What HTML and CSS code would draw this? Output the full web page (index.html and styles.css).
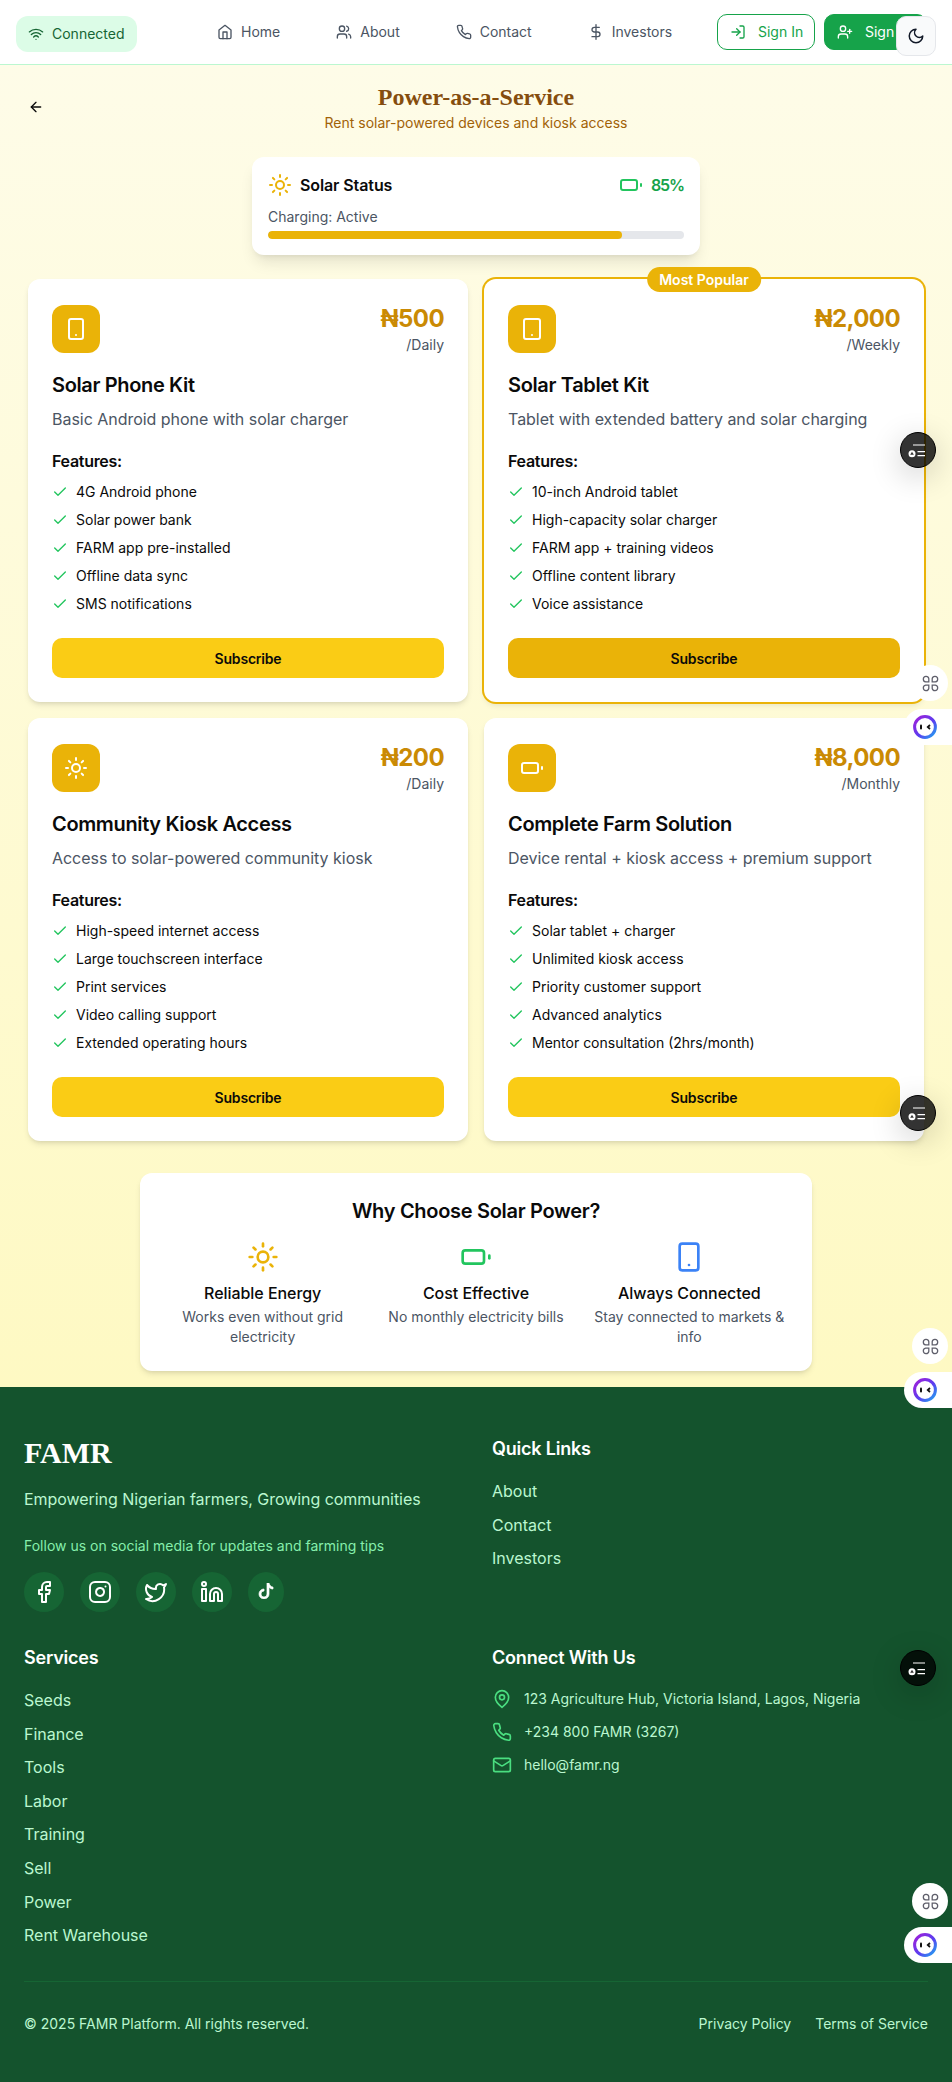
FILE: index.html
```html
<!DOCTYPE html>
<html lang="en">
<head>
    <meta charset="UTF-8">
    <title>Power-as-a-Service</title>
    <link rel="stylesheet" href="styles.css">
</head>
<body>
    <svg class="sprite" width="0" height="0" aria-hidden="true">
        <defs>
            <linearGradient id="face-ring" x1="0" y1="0" x2="1" y2="1">
                <stop offset="0" stop-color="#a21fd8"/>
                <stop offset="0.55" stop-color="#5b3df0"/>
                <stop offset="1" stop-color="#1fa8f0"/>
            </linearGradient>
        </defs>
        <symbol id="i-wifi" viewBox="0 0 24 24"><path d="M12 20h.01"/><path d="M2 8.82a15 15 0 0 1 20 0"/><path d="M5 12.859a10 10 0 0 1 14 0"/><path d="M8.5 16.429a5 5 0 0 1 7 0"/></symbol>
        <symbol id="i-home" viewBox="0 0 24 24"><path d="m3 9 9-7 9 7v11a2 2 0 0 1-2 2H5a2 2 0 0 1-2-2z"/><polyline points="9 22 9 12 15 12 15 22"/></symbol>
        <symbol id="i-users" viewBox="0 0 24 24"><path d="M16 21v-2a4 4 0 0 0-4-4H6a4 4 0 0 0-4 4v2"/><circle cx="9" cy="7" r="4"/><path d="M22 21v-2a4 4 0 0 0-3-3.87"/><path d="M16 3.13a4 4 0 0 1 0 7.75"/></symbol>
        <symbol id="i-phone" viewBox="0 0 24 24"><path d="M22 16.92v3a2 2 0 0 1-2.18 2 19.79 19.79 0 0 1-8.63-3.07 19.5 19.5 0 0 1-6-6 19.79 19.79 0 0 1-3.07-8.67A2 2 0 0 1 4.11 2h3a2 2 0 0 1 2 1.72 12.84 12.84 0 0 0 .7 2.81 2 2 0 0 1-.45 2.11L8.09 9.91a16 16 0 0 0 6 6l1.27-1.27a2 2 0 0 1 2.11-.45 12.84 12.84 0 0 0 2.81.7A2 2 0 0 1 22 16.92z"/></symbol>
        <symbol id="i-dollar" viewBox="0 0 24 24"><line x1="12" y1="1" x2="12" y2="23"/><path d="M17 5H9.5a3.5 3.5 0 0 0 0 7h5a3.5 3.5 0 0 1 0 7H6"/></symbol>
        <symbol id="i-login" viewBox="0 0 24 24"><path d="M15 3h4a2 2 0 0 1 2 2v14a2 2 0 0 1-2 2h-4"/><polyline points="10 17 15 12 10 7"/><line x1="15" y1="12" x2="3" y2="12"/></symbol>
        <symbol id="i-userplus" viewBox="0 0 24 24"><path d="M16 21v-2a4 4 0 0 0-4-4H6a4 4 0 0 0-4 4v2"/><circle cx="9" cy="7" r="4"/><line x1="19" y1="8" x2="19" y2="14"/><line x1="22" y1="11" x2="16" y2="11"/></symbol>
        <symbol id="i-moon" viewBox="0 0 24 24"><path d="M12 3a6 6 0 0 0 9 9 9 9 0 1 1-9-9Z"/></symbol>
        <symbol id="i-back" viewBox="0 0 24 24"><path d="m12 19-7-7 7-7"/><path d="M19 12H5"/></symbol>
        <symbol id="i-check" viewBox="0 0 24 24"><path d="M20 6 9 17l-5-5"/></symbol>
        <symbol id="i-sun" viewBox="0 0 24 24"><circle cx="12" cy="12" r="4"/><path d="M12 2v2"/><path d="M12 20v2"/><path d="m4.93 4.93 1.41 1.41"/><path d="m17.66 17.66 1.41 1.41"/><path d="M2 12h2"/><path d="M20 12h2"/><path d="m6.34 17.66-1.41 1.41"/><path d="m19.07 4.93-1.41 1.41"/></symbol>
        <symbol id="i-battery" viewBox="0 0 24 24"><rect x="2" y="7" width="16" height="10" rx="2"/><line x1="22" y1="11" x2="22" y2="13"/></symbol>
        <symbol id="i-smartphone" viewBox="0 0 24 24"><rect x="5" y="2" width="14" height="20" rx="2"/><path d="M12 18h.01"/></symbol>
        <symbol id="i-tablet" viewBox="0 0 24 24"><rect x="4" y="2" width="16" height="20" rx="2"/><path d="M12 18h.01"/></symbol>
        <symbol id="i-facebook" viewBox="0 0 24 24"><path d="M18 2h-3a5 5 0 0 0-5 5v3H7v4h3v8h4v-8h3l1-4h-4V7a1 1 0 0 1 1-1h3z"/></symbol>
        <symbol id="i-instagram" viewBox="0 0 24 24"><rect x="2" y="2" width="20" height="20" rx="5"/><path d="M16 11.37A4 4 0 1 1 12.63 8 4 4 0 0 1 16 11.37z"/><line x1="17.5" y1="6.5" x2="17.51" y2="6.5"/></symbol>
        <symbol id="i-twitter" viewBox="0 0 24 24"><path d="M22 4s-.7 2.1-2 3.4c1.6 10-9.4 17.3-18 11.6 2.2.1 4.4-.6 6-2C3 15.5.5 9.6 3 5c2.2 2.6 5.6 4.1 9 4-.9-4.2 4-6.6 7-3.8 1.1 0 3-1.2 3-1.2z"/></symbol>
        <symbol id="i-linkedin" viewBox="0 0 24 24"><path d="M16 8a6 6 0 0 1 6 6v7h-4v-7a2 2 0 0 0-2-2 2 2 0 0 0-2 2v7h-4v-7a6 6 0 0 1 6-6z"/><rect x="2" y="9" width="4" height="12"/><circle cx="4" cy="4" r="2"/></symbol>
        <symbol id="i-pin" viewBox="0 0 24 24"><path d="M20 10c0 6-8 12-8 12s-8-6-8-12a8 8 0 0 1 16 0Z"/><circle cx="12" cy="10" r="3"/></symbol>
        <symbol id="i-mail" viewBox="0 0 24 24"><rect x="2" y="4" width="20" height="16" rx="2"/><path d="m22 7-8.97 5.7a1.94 1.94 0 0 1-2.06 0L2 7"/></symbol>
        <symbol id="i-lobes" viewBox="0 0 16 16"><path d="M6.4 6.4H3.4A2.6 2.6 0 1 1 6.4 3.4z"/><path d="M9.6 6.4h3A2.6 2.6 0 1 0 9.6 3.4z"/><path d="M6.4 9.6H3.4A2.6 2.6 0 1 0 6.4 12.6z"/><path d="M9.6 9.6h3A2.6 2.6 0 1 1 9.6 12.6z"/></symbol>
        <symbol id="i-face" viewBox="0 0 24 24"><circle class="face-ring" cx="12" cy="12" r="10.4"/><rect x="7" y="9.5" width="2" height="5" rx="1"/><path class="face-eye" d="M17 10l-2.2 2 2.2 2"/></symbol>
        <symbol id="i-tasks" viewBox="0 0 36 36"><path class="fab-lines" d="M13 13h12M17.5 19.6H25M17.5 23.7H25"/><circle cx="12" cy="21.7" r="3.5" fill="#fff"/><path d="M12 19.7l1.8 3h-3.6z" fill="#333"/></symbol>
    </svg>

    <header class="navbar">
        <div class="status-pill">
            <svg class="icon icon-16"><use href="#i-wifi"/></svg>
            <span>Connected</span>
        </div>
        <nav class="nav-links">
            <a class="nav-link"><svg class="icon icon-16"><use href="#i-home"/></svg>Home</a>
            <a class="nav-link"><svg class="icon icon-16"><use href="#i-users"/></svg>About</a>
            <a class="nav-link"><svg class="icon icon-16"><use href="#i-phone"/></svg>Contact</a>
            <a class="nav-link"><svg class="icon icon-16"><use href="#i-dollar"/></svg>Investors</a>
        </nav>
        <div class="nav-auth">
            <a class="auth-btn auth-outline"><svg class="icon icon-16"><use href="#i-login"/></svg>Sign In</a>
            <a class="auth-btn auth-solid"><svg class="icon icon-16"><use href="#i-userplus"/></svg>Sign Up</a>
        </div>
    </header>

    <main class="content">
        <div class="page-head">
            <svg class="icon icon-16 back-arrow"><use href="#i-back"/></svg>
            <div class="page-title">
                <h1>Power-as-a-Service</h1>
                <p>Rent solar-powered devices and kiosk access</p>
            </div>
        </div>

        <section class="solar-status">
            <div class="solar-row">
                <div class="solar-label">
                    <svg class="icon icon-24 text-yellow"><use href="#i-sun"/></svg>
                    <span>Solar Status</span>
                </div>
                <div class="solar-charge">
                    <svg class="icon icon-24 text-green"><use href="#i-battery"/></svg>
                    <span>85%</span>
                </div>
            </div>
            <p class="solar-note">Charging: Active</p>
            <div class="progress"><div class="progress-fill" style="width: 85%"></div></div>
        </section>

        <section class="plans">
            <article class="plan">
                <div class="plan-head">
                    <div class="plan-icon"><svg class="icon icon-24"><use href="#i-smartphone"/></svg></div>
                    <div class="plan-price"><strong>₦500</strong><span>/Daily</span></div>
                </div>
                <h2>Solar Phone Kit</h2>
                <p class="plan-desc">Basic Android phone with solar charger</p>
                <h3>Features:</h3>
                <ul class="features">
                    <li><svg class="icon icon-16"><use href="#i-check"/></svg>4G Android phone</li>
                    <li><svg class="icon icon-16"><use href="#i-check"/></svg>Solar power bank</li>
                    <li><svg class="icon icon-16"><use href="#i-check"/></svg>FARM app pre-installed</li>
                    <li><svg class="icon icon-16"><use href="#i-check"/></svg>Offline data sync</li>
                    <li><svg class="icon icon-16"><use href="#i-check"/></svg>SMS notifications</li>
                </ul>
                <button class="subscribe">Subscribe</button>
            </article>

            <article class="plan plan-popular">
                <span class="badge">Most Popular</span>
                <div class="plan-head">
                    <div class="plan-icon"><svg class="icon icon-24"><use href="#i-tablet"/></svg></div>
                    <div class="plan-price"><strong>₦2,000</strong><span>/Weekly</span></div>
                </div>
                <h2>Solar Tablet Kit</h2>
                <p class="plan-desc">Tablet with extended battery and solar charging</p>
                <h3>Features:</h3>
                <ul class="features">
                    <li><svg class="icon icon-16"><use href="#i-check"/></svg>10-inch Android tablet</li>
                    <li><svg class="icon icon-16"><use href="#i-check"/></svg>High-capacity solar charger</li>
                    <li><svg class="icon icon-16"><use href="#i-check"/></svg>FARM app + training videos</li>
                    <li><svg class="icon icon-16"><use href="#i-check"/></svg>Offline content library</li>
                    <li><svg class="icon icon-16"><use href="#i-check"/></svg>Voice assistance</li>
                </ul>
                <button class="subscribe">Subscribe</button>
            </article>

            <article class="plan">
                <div class="plan-head">
                    <div class="plan-icon"><svg class="icon icon-24"><use href="#i-sun"/></svg></div>
                    <div class="plan-price"><strong>₦200</strong><span>/Daily</span></div>
                </div>
                <h2>Community Kiosk Access</h2>
                <p class="plan-desc">Access to solar-powered community kiosk</p>
                <h3>Features:</h3>
                <ul class="features">
                    <li><svg class="icon icon-16"><use href="#i-check"/></svg>High-speed internet access</li>
                    <li><svg class="icon icon-16"><use href="#i-check"/></svg>Large touchscreen interface</li>
                    <li><svg class="icon icon-16"><use href="#i-check"/></svg>Print services</li>
                    <li><svg class="icon icon-16"><use href="#i-check"/></svg>Video calling support</li>
                    <li><svg class="icon icon-16"><use href="#i-check"/></svg>Extended operating hours</li>
                </ul>
                <button class="subscribe">Subscribe</button>
            </article>

            <article class="plan">
                <div class="plan-head">
                    <div class="plan-icon"><svg class="icon icon-24"><use href="#i-battery"/></svg></div>
                    <div class="plan-price"><strong>₦8,000</strong><span>/Monthly</span></div>
                </div>
                <h2>Complete Farm Solution</h2>
                <p class="plan-desc">Device rental + kiosk access + premium support</p>
                <h3>Features:</h3>
                <ul class="features">
                    <li><svg class="icon icon-16"><use href="#i-check"/></svg>Solar tablet + charger</li>
                    <li><svg class="icon icon-16"><use href="#i-check"/></svg>Unlimited kiosk access</li>
                    <li><svg class="icon icon-16"><use href="#i-check"/></svg>Priority customer support</li>
                    <li><svg class="icon icon-16"><use href="#i-check"/></svg>Advanced analytics</li>
                    <li><svg class="icon icon-16"><use href="#i-check"/></svg>Mentor consultation (2hrs/month)</li>
                </ul>
                <button class="subscribe">Subscribe</button>
            </article>
        </section>

        <section class="why">
            <h2>Why Choose Solar Power?</h2>
            <div class="why-grid">
                <div class="why-item">
                    <svg class="icon icon-32 text-yellow"><use href="#i-sun"/></svg>
                    <h4>Reliable Energy</h4>
                    <p>Works even without grid electricity</p>
                </div>
                <div class="why-item">
                    <svg class="icon icon-32 text-green"><use href="#i-battery"/></svg>
                    <h4>Cost Effective</h4>
                    <p>No monthly electricity bills</p>
                </div>
                <div class="why-item">
                    <svg class="icon icon-32 text-blue"><use href="#i-smartphone"/></svg>
                    <h4>Always Connected</h4>
                    <p>Stay connected to markets &amp; info</p>
                </div>
            </div>
        </section>
    </main>

    <footer class="footer">
        <div class="footer-grid">
            <div class="footer-col">
                <div class="brand">FAMR</div>
                <p class="tagline">Empowering Nigerian farmers, Growing communities</p>
                <p class="follow">Follow us on social media for updates and farming tips</p>
                <div class="socials">
                    <a class="social"><svg class="icon icon-24"><use href="#i-facebook"/></svg></a>
                    <a class="social"><svg class="icon icon-24"><use href="#i-instagram"/></svg></a>
                    <a class="social"><svg class="icon icon-24"><use href="#i-twitter"/></svg></a>
                    <a class="social"><svg class="icon icon-24"><use href="#i-linkedin"/></svg></a>
                    <a class="social social-narrow">
                        <svg class="tiktok" viewBox="0 0 16 16"><path d="M9 0h1.98c.144.715.54 1.617 1.235 2.512C12.895 3.389 13.797 4 15 4v2c-1.753 0-3.07-.814-4-1.829V11a5 5 0 1 1-5-5v2a3 3 0 1 0 3 3V0Z"/></svg>
                    </a>
                </div>
            </div>
            <div class="footer-col">
                <h5>Quick Links</h5>
                <ul class="footer-links">
                    <li>About</li>
                    <li>Contact</li>
                    <li>Investors</li>
                </ul>
            </div>
            <div class="footer-col">
                <h5>Services</h5>
                <ul class="footer-links">
                    <li>Seeds</li>
                    <li>Finance</li>
                    <li>Tools</li>
                    <li>Labor</li>
                    <li>Training</li>
                    <li>Sell</li>
                    <li>Power</li>
                    <li>Rent Warehouse</li>
                </ul>
            </div>
            <div class="footer-col">
                <h5>Connect With Us</h5>
                <ul class="contact-list">
                    <li><svg class="icon icon-20"><use href="#i-pin"/></svg>123 Agriculture Hub, Victoria Island, Lagos, Nigeria</li>
                    <li><svg class="icon icon-20"><use href="#i-phone"/></svg>+234 800 FAMR (3267)</li>
                    <li><svg class="icon icon-20"><use href="#i-mail"/></svg>hello@famr.ng</li>
                </ul>
            </div>
        </div>
        <div class="footer-bottom">
            <span>© 2025 FAMR Platform. All rights reserved.</span>
            <div class="legal">
                <a>Privacy Policy</a>
                <a>Terms of Service</a>
            </div>
        </div>
    </footer>

    <!-- floating things that sit over the page -->
    <button class="theme-toggle"><svg class="icon icon-18"><use href="#i-moon"/></svg></button>

    <div class="fab fab-dark dark-1"><svg class="tasks-mark"><use href="#i-tasks"/></svg></div>
    <div class="fab fab-dark dark-2"><svg class="tasks-mark"><use href="#i-tasks"/></svg></div>
    <div class="fab fab-dark dark-3"><svg class="tasks-mark"><use href="#i-tasks"/></svg></div>

    <div class="fab-pair pair-1">
        <div class="fab fab-light"><svg class="grid-mark"><use href="#i-lobes"/></svg></div>
        <div class="fab-face"><svg class="face-mark"><use href="#i-face"/></svg></div>
    </div>
    <div class="fab-pair pair-2">
        <div class="fab fab-light"><svg class="grid-mark"><use href="#i-lobes"/></svg></div>
        <div class="fab-face"><svg class="face-mark"><use href="#i-face"/></svg></div>
    </div>
    <div class="fab-pair pair-3">
        <div class="fab fab-light"><svg class="grid-mark"><use href="#i-lobes"/></svg></div>
        <div class="fab-face"><svg class="face-mark"><use href="#i-face"/></svg></div>
    </div>
</body>
</html>
```

FILE: styles.css
```css
* {
    margin: 0;
    padding: 0;
    box-sizing: border-box;
}

html, body {
    height: 2082px;
    overflow: hidden;
}
body {
    position: relative;
    font-family: "Inter", "Liberation Sans", sans-serif;
    font-size: 16px;
    color: #0a0a0a;
}

.sprite {
    position: absolute;
}
ul {
    list-style: none;
}

/* icons */
.icon {
    flex: none;
    fill: none;
    stroke: currentColor;
    stroke-width: 2;
    stroke-linecap: round;
    stroke-linejoin: round;
}
.icon-16 { width: 16px; height: 16px; }
.icon-18 { width: 18px; height: 18px; }
.icon-20 { width: 20px; height: 20px; }
.icon-24 { width: 24px; height: 24px; }
.icon-32 { width: 32px; height: 32px; display: block; margin: 0 auto; }
.text-yellow { color: #eab308; }
.text-green { color: #22c55e; }
.text-blue { color: #3b82f6; }

/* top bar */
.navbar {
    height: 65px;
    display: flex;
    align-items: center;
    padding: 0 25px 1px 16px;
    background: #fff;
    border-bottom: 1px solid #bbf7d0;
}
.status-pill {
    width: 121px;
    height: 36px;
    margin-top: 4px;
    display: flex;
    align-items: center;
    gap: 8px;
    padding-left: 12px;
    border-radius: 12px;
    background: #dcfce7;
    color: #166534;
    font-size: 14px;
}
.nav-links {
    display: flex;
    gap: 56px;
    margin-left: 80px;
}
.nav-link {
    display: flex;
    align-items: center;
    gap: 8px;
    font-size: 14px;
    line-height: 20px;
    color: #4b5563;
}
.nav-auth {
    display: flex;
    gap: 9px;
    margin-left: auto;
}
.auth-btn {
    height: 36px;
    display: flex;
    align-items: center;
    gap: 12px;
    padding: 0 12px;
    border-radius: 10px;
    font-size: 14px;
    white-space: nowrap;
    border: 1px solid #16a34a;
}
.auth-outline {
    width: 98px;
    color: #16a34a;
    background: #fff;
}
.auth-solid {
    width: 103px;
    color: #fff;
    background: #16a34a;
}

/* main area */
.content {
    height: 1322px;
    padding: 16px 28px 0;
    background: linear-gradient(180deg, #fefce8, #fef9c3);
}
.page-head {
    display: grid;
    grid-template-columns: 16px 1fr 16px;
    align-items: center;
    margin-bottom: 24px;
}
.back-arrow {
    color: #0a0a0a;
}
.page-title {
    text-align: center;
}
.page-title h1 {
    font-family: "Liberation Serif", serif;
    font-size: 24px;
    line-height: 32px;
    font-weight: 700;
    color: #854d0e;
}
.page-title p {
    font-size: 14px;
    line-height: 20px;
    color: #a16207;
}

.solar-status {
    width: 448px;
    margin: 0 auto 24px;
    padding: 16px;
    background: #fff;
    border-radius: 12px;
    box-shadow: 0 10px 15px -3px rgba(0, 0, 0, .1), 0 4px 6px -4px rgba(0, 0, 0, .1);
}
.solar-row {
    display: flex;
    justify-content: space-between;
    align-items: center;
    margin-bottom: 10px;
    font-weight: 600;
    letter-spacing: -0.1px;
    line-height: 24px;
}
.solar-label, .solar-charge {
    display: flex;
    align-items: center;
    gap: 8px;
}
.solar-charge span {
    color: #16a34a;
    letter-spacing: -1.1px;
}
.solar-note {
    font-size: 14px;
    line-height: 20px;
    color: #4b5563;
    margin-bottom: 4px;
}
.progress {
    height: 8px;
    border-radius: 4px;
    background: #e5e7eb;
    overflow: hidden;
}
.progress-fill {
    height: 100%;
    border-radius: 4px;
    background: #eab308;
}

/* plan cards */
.plans {
    display: grid;
    grid-template-columns: 1fr 1fr;
    gap: 16px;
}
.plan {
    position: relative;
    height: 423px;
    padding: 24px;
    background: #fff;
    border-radius: 12px;
    box-shadow: 0 4px 6px -1px rgba(0, 0, 0, .1), 0 2px 4px -2px rgba(0, 0, 0, .1);
    display: flex;
    flex-direction: column;
}
.plan-popular {
    box-shadow: 0 0 0 2px #eab308, 0 4px 6px -1px rgba(0, 0, 0, .1);
}
.badge {
    position: absolute;
    top: -12px;
    left: 50%;
    transform: translateX(-50%);
    height: 25px;
    padding: 0 12px;
    border-radius: 999px;
    background: #eab308;
    color: #fff;
    font-size: 14px;
    line-height: 25px;
    font-weight: 600;
    white-space: nowrap;
}
.plan-head {
    display: flex;
    justify-content: space-between;
    align-items: center;
    margin-bottom: 16px;
}
.plan-icon {
    width: 48px;
    height: 48px;
    border-radius: 12px;
    background: #eab308;
    color: #fff;
    display: flex;
    align-items: center;
    justify-content: center;
}
.plan-price {
    text-align: right;
}
.plan-price strong {
    display: block;
    font-size: 24px;
    line-height: 32px;
    font-weight: 700;
    letter-spacing: -0.6px;
    color: #ca8a04;
}
.plan-price span {
    display: block;
    font-size: 14px;
    line-height: 20px;
    color: #4b5563;
}
.plan h2 {
    font-size: 20px;
    line-height: 28px;
    font-weight: 600;
    letter-spacing: -0.35px;
    margin-bottom: 8px;
}
.plan-desc {
    line-height: 24px;
    letter-spacing: -0.03px;
    color: #4b5563;
    margin-bottom: 18px;
}
.plan h3 {
    font-size: 16px;
    line-height: 24px;
    font-weight: 600;
    letter-spacing: -0.3px;
    margin-bottom: 9px;
}
.features {
    display: flex;
    flex-direction: column;
    gap: 8px;
}
.features li {
    display: flex;
    align-items: center;
    gap: 8px;
    font-size: 14px;
    line-height: 20px;
}
.features .icon {
    color: #22c55e;
}
.subscribe {
    height: 40px;
    margin-top: auto;
    border: none;
    border-radius: 10px;
    background: #facc15;
    color: #0a0a0a;
    font-family: inherit;
    font-size: 14px;
    font-weight: 600;
    letter-spacing: -0.2px;
}
.plan-popular .subscribe {
    background: #eab308;
}

/* why solar */
.why {
    width: 672px;
    margin: 32px auto 0;
    padding: 24px;
    background: #fff;
    border-radius: 12px;
    box-shadow: 0 4px 6px -1px rgba(0, 0, 0, .1), 0 2px 4px -2px rgba(0, 0, 0, .1);
    text-align: center;
}
.why h2 {
    font-size: 20px;
    line-height: 28px;
    font-weight: 600;
    letter-spacing: -0.3px;
    margin-bottom: 16px;
}
.why-grid {
    display: grid;
    grid-template-columns: repeat(3, 1fr);
    gap: 16px;
}
.why-item h4 {
    margin: 8px 0 2px;
    font-size: 16px;
    line-height: 24px;
    font-weight: 500;
    letter-spacing: -0.05px;
}
.why-item p {
    font-size: 14px;
    line-height: 20px;
    color: #4b5563;
}

/* footer */
.footer {
    height: 695px;
    padding: 48px 24px;
    background: #14532d;
    color: #bbf7d0;
}
.footer-grid {
    display: grid;
    grid-template-columns: 1fr 1fr;
    gap: 32px;
}
.brand {
    font-family: "Liberation Serif", serif;
    font-size: 30px;
    line-height: 36px;
    font-weight: 700;
    color: #fff;
    margin-bottom: 16px;
}
.tagline {
    line-height: 24px;
    letter-spacing: -0.05px;
    margin-bottom: 25px;
}
.follow {
    font-size: 14px;
    line-height: 20px;
    color: #86efac;
    margin-bottom: 16px;
}
.socials {
    display: flex;
    gap: 16px;
}
.social {
    width: 40px;
    height: 40px;
    border-radius: 50%;
    background: #166534;
    color: #fff;
    display: flex;
    align-items: center;
    justify-content: center;
}
.social-narrow {
    width: 36px;
    border-radius: 18px / 20px;
}
.tiktok {
    width: 16px;
    height: 16px;
    margin-bottom: 3px;
    fill: #fff;
    stroke: #fff;
    stroke-width: .7;
}
.footer h5 {
    font-size: 18px;
    line-height: 28px;
    font-weight: 600;
    letter-spacing: -0.2px;
    color: #fff;
    margin-bottom: 16px;
}
.footer-links {
    display: flex;
    flex-direction: column;
    gap: 8px;
    line-height: 25.6px;
}
.contact-list {
    display: flex;
    flex-direction: column;
    gap: 12px;
}
.contact-list li {
    display: flex;
    align-items: center;
    gap: 12px;
    font-size: 14px;
    line-height: 21px;
}
.contact-list .icon {
    color: #4ade80;
}
.footer-bottom {
    margin-top: 32px;
    padding-top: 32px;
    border-top: 1px solid #166534;
    display: flex;
    justify-content: space-between;
    font-size: 14px;
    line-height: 20px;
}
.legal {
    display: flex;
    gap: 24px;
}

/* floating widgets */
.theme-toggle {
    position: absolute;
    top: 16px;
    left: 896px;
    width: 40px;
    height: 40px;
    border-radius: 10px;
    border: 1px solid #e5e7eb;
    background: #f9fafb;
    color: #111827;
    display: flex;
    align-items: center;
    justify-content: center;
}
.fab {
    width: 36px;
    height: 36px;
    border-radius: 50%;
}
.fab-dark {
    position: absolute;
    left: 900px;
    background: rgba(0, 0, 0, .8);
    border: 1px solid #000;
    box-shadow: 0 8px 32px rgba(0, 0, 0, .2);
}
.tasks-mark {
    display: block;
    width: 36px;
    height: 36px;
    margin: -1px;
}
.fab-lines {
    fill: none;
    stroke: #fff;
    stroke-width: 1.2;
}
.dark-1 { top: 432px; }
.dark-2 { top: 1095px; }
.dark-3 { top: 1650px; }

.fab-pair {
    position: absolute;
    left: 904px;
    width: 48px;
    display: flex;
    flex-direction: column;
    gap: 8px;
}
.pair-1 { top: 665px; }
.pair-2 { top: 1328px; }
.pair-3 { top: 1883px; }

.fab-light {
    margin-left: 8px;
    background: #fff;
    display: flex;
    align-items: center;
    justify-content: center;
}
.grid-mark {
    width: 17px;
    height: 17px;
    fill: none;
    stroke: #5f5f6b;
    stroke-width: 1.2;
}
.fab-face {
    height: 36px;
    padding-left: 9px;
    border-radius: 18px 0 0 18px;
    background: #fff;
    display: flex;
    align-items: center;
}
.face-mark {
    width: 24px;
    height: 24px;
    fill: #111;
}
.face-ring {
    fill: #fff;
    stroke: url(#face-ring);
    stroke-width: 3;
}
.face-eye {
    fill: none;
    stroke: #111;
    stroke-width: 1.8;
}
```
